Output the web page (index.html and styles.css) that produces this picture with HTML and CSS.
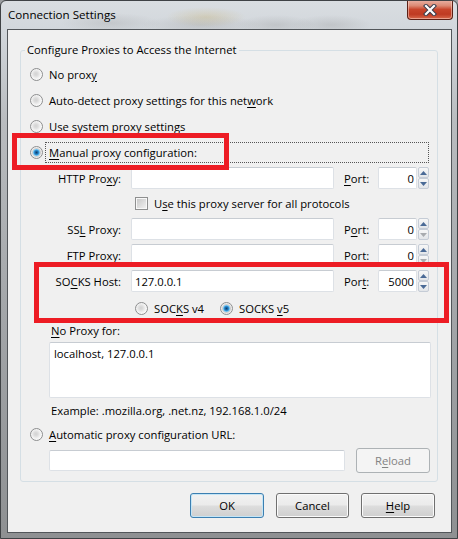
FILE: index.html
```html
<!DOCTYPE html>
<html>
<head>
<meta charset="utf-8">
<title>Connection Settings</title>
<link rel="stylesheet" href="styles.css">
</head>
<body>
<div class="window">
  <div class="titlebar">
    <span class="title">Connection Settings</span>
    <div class="close">
      <svg width="16" height="12" viewBox="0 0 16 12">
        <path d="M4 2 L12 10 M12 2 L4 10" stroke="#3b3f4d" stroke-width="4.2" stroke-linecap="square" fill="none"/>
        <path d="M4 2 L12 10 M12 2 L4 10" stroke="#ffffff" stroke-width="2.2" stroke-linecap="square" fill="none"/>
      </svg>
    </div>
  </div>
  <div class="client">
    <fieldset class="group">
      <legend>Configure Proxies to Access the Internet</legend>
      <div class="opt"><span class="radio"></span><span class="lbl">No prox<u>y</u></span></div>
      <div class="opt"><span class="radio"></span><span class="lbl">Auto-detect proxy settings for this net<u>w</u>ork</span></div>
      <div class="opt"><span class="radio"></span><span class="lbl"><u>U</u>se system proxy settings</span></div>
      <div class="opt"><span class="radio on"></span><span class="lbl focus"><u>M</u>anual proxy configuration:</span></div>

      <div class="field first">
        <span class="flabel">HTTP Pro<u>x</u>y:</span>
        <span class="input host"></span>
        <span class="plabel"><u>P</u>ort:</span>
        <span class="input port">0</span>
        <span class="spin"><span class="sb"><svg width="7" height="4" viewBox="0 0 7 4"><path d="M0 4 L3.5 0 L7 4Z" class="ar"/></svg></span><span class="sb"><svg width="7" height="4" viewBox="0 0 7 4"><path d="M0 0 L3.5 4 L7 0Z" class="ar"/></svg></span></span>
      </div>

      <div class="check-row"><span class="check"></span><span class="lbl">U<u>s</u>e this proxy server for all protocols</span></div>

      <div class="field">
        <span class="flabel">SS<u>L</u> Proxy:</span>
        <span class="input host"></span>
        <span class="plabel">P<u>o</u>rt:</span>
        <span class="input port">0</span>
        <span class="spin"><span class="sb"><svg width="7" height="4" viewBox="0 0 7 4"><path d="M0 4 L3.5 0 L7 4Z" class="ar"/></svg></span><span class="sb off"><svg width="7" height="4" viewBox="0 0 7 4"><path d="M0 0 L3.5 4 L7 0Z" class="ar"/></svg></span></span>
      </div>

      <div class="field">
        <span class="flabel"><u>F</u>TP Proxy:</span>
        <span class="input host"></span>
        <span class="plabel">Po<u>r</u>t:</span>
        <span class="input port">0</span>
        <span class="spin"><span class="sb"><svg width="7" height="4" viewBox="0 0 7 4"><path d="M0 4 L3.5 0 L7 4Z" class="ar"/></svg></span><span class="sb off"><svg width="7" height="4" viewBox="0 0 7 4"><path d="M0 0 L3.5 4 L7 0Z" class="ar"/></svg></span></span>
      </div>

      <div class="field">
        <span class="flabel">SO<u>C</u>KS Host:</span>
        <span class="input host">127.0.0.1</span>
        <span class="plabel">Por<u>t</u>:</span>
        <span class="input port">5000</span>
        <span class="spin"><span class="sb"><svg width="7" height="4" viewBox="0 0 7 4"><path d="M0 4 L3.5 0 L7 4Z" class="ar"/></svg></span><span class="sb"><svg width="7" height="4" viewBox="0 0 7 4"><path d="M0 0 L3.5 4 L7 0Z" class="ar"/></svg></span></span>
      </div>

      <div class="socks-row">
        <span class="sopt v4"><span class="radio"></span><span class="lbl">SOC<u>K</u>S v4</span></span>
        <span class="sopt"><span class="radio on"></span><span class="lbl">SOCKS <u>v</u>5</span></span>
      </div>

      <div class="note"><u>N</u>o Proxy for:</div>
      <div class="textarea">localhost, 127.0.0.1</div>
      <div class="note example">Example: .mozilla.org, .net.nz, 192.168.1.0/24</div>

      <div class="opt auto"><span class="radio"></span><span class="lbl"><u>A</u>utomatic proxy configuration URL:</span></div>
      <div class="url-row">
        <span class="input url"></span>
        <span class="btn disabled reload">R<u>e</u>load</span>
      </div>
    </fieldset>

    <div class="buttons">
      <span class="btn default">OK</span>
      <span class="btn cancel">Cancel</span>
      <span class="btn"><u>H</u>elp</span>
    </div>
  </div>
  <div class="mark m1"></div>
  <div class="mark m2"></div>
</div>
</body>
</html>
```

FILE: styles.css
```css
html, body {
  margin: 0;
  padding: 0;
  background: #9a9da0;
}

.window {
  position: relative;
  width: 458px;
  height: 539px;
  box-sizing: border-box;
  border: 1px solid #3f4245;
  border-radius: 6px 6px 0 0;
  background:
    radial-gradient(ellipse 40px 10px at 205px 16px, rgba(200, 180, 120, 0.35), transparent),
    radial-gradient(ellipse 50px 10px at 110px 22px, rgba(150, 150, 150, 0.25), transparent),
    radial-gradient(ellipse 60px 10px at 200px 24px, rgba(140, 140, 140, 0.25), transparent),
    radial-gradient(ellipse 40px 10px at 275px 24px, rgba(140, 140, 140, 0.25), transparent),
    radial-gradient(ellipse 40px 10px at 330px 24px, rgba(140, 140, 140, 0.25), transparent),
    linear-gradient(#d9dde1 0, #d2d7dc 28px, #b9bcbf 120px, #a4a7aa 300px, #8e9092 539px);
  font-family: "Open Sans", "Noto Sans", sans-serif;
  font-size: 11.25px;
  line-height: 15px;
  color: #000;
  overflow: hidden;
}

.titlebar {
  display: flex;
  justify-content: space-between;
  align-items: flex-start;
  height: 28px;
}

.title {
  margin: 6px 0 0 7px;
  font-size: 11.6px;
  line-height: 16px;
  color: #000;
}

.close {
  width: 44px;
  height: 19px;
  margin-right: 4px;
  margin-top: -1px;
  border: 1px solid #5b2016;
  border-top: none;
  border-radius: 0 0 4px 4px;
  background: linear-gradient(#e9b3a6 0, #dc8a74 30%, #c8452b 50%, #bf3a22 75%, #d8694c 100%);
  box-shadow: inset 0 0 0 1px rgba(255, 220, 210, 0.5);
  display: flex;
  align-items: center;
  justify-content: center;
}

.client {
  margin: 0 5px 0 6px;
  height: 504px;
  box-sizing: border-box;
  border: 1px solid #52565a;
  background: #f0f0f0;
  display: flex;
  flex-direction: column;
}

.group {
  margin: 12px 13px 0 12px;
  padding: 3px 0 8px 0;
  border: 1px solid #d5dfe5;
  border-radius: 3px;
  min-width: 0;
}

.group legend {
  margin-left: 4px;
  padding: 0 2px;
  line-height: 16px;
}

u {
  text-decoration: underline;
  text-underline-offset: 2px;
}

.opt {
  display: flex;
  align-items: center;
  height: 26px;
  padding-left: 9px;
}

.opt .lbl {
  margin-left: 6px;
}

.opt .lbl.focus {
  flex: 1;
  margin: 0 8px 0 2px;
  padding: 2px 3px;
  border: 1px dotted #555;
}

.radio {
  flex: none;
  width: 13px;
  height: 13px;
  box-sizing: border-box;
  border-radius: 50%;
  border: 1px solid #8d8e8f;
  background: radial-gradient(circle at 45% 45%, #d2d2d2 0, #dcdcdc 2px, #eeeeee 4px, #fbfbfb 6px);
}

.radio.on {
  background: radial-gradient(circle at 50% 50%, #0f3f6a 0, #1f70b0 1.5px, #3ea3e3 2.6px, #8fd2f6 3.3px, #c9c9c9 3.9px, #e6e6e6 4.6px, #fbfbfb 6px);
}

.field {
  display: flex;
  align-items: center;
  height: 22px;
  margin-top: 4px;
}

.field.first {
  margin-top: 2px;
}

.flabel {
  width: 100px;
  text-align: right;
  flex: none;
}

.input {
  box-sizing: border-box;
  height: 22px;
  background: #fff;
  border: 1px solid #dde1e6;
  border-top-color: #c7ccd2;
  border-radius: 2px;
  padding: 0 3px;
  display: flex;
  align-items: center;
  flex: none;
}

.input.host {
  width: 203px;
  margin-left: 10px;
}

.plabel {
  width: 34px;
  margin-left: 10px;
  flex: none;
}

.input.port {
  width: 39px;
  justify-content: flex-end;
  padding-right: 2px;
}

.spin {
  display: flex;
  flex-direction: column;
  margin-left: 1px;
  width: 11px;
  height: 22px;
}

.sb {
  height: 11px;
  box-sizing: border-box;
  border: 1px solid #c5ccd6;
  border-radius: 2px;
  background: linear-gradient(#f7f7f7, #e2e5e9);
  display: flex;
  align-items: center;
  justify-content: center;
}

.sb .ar {
  fill: #4a6a96;
}

.sb.off .ar {
  fill: #a8abaf;
}

.check-row {
  display: flex;
  align-items: center;
  height: 21px;
  margin-top: 4px;
  padding-left: 114px;
}

.check {
  flex: none;
  width: 13px;
  height: 13px;
  box-sizing: border-box;
  border: 1px solid #8e8f8f;
  background: linear-gradient(135deg, #c4c4c4, #f4f4f4);
  box-shadow: inset 0 0 0 1px #f8f8f8;
}

.check-row .lbl {
  margin-left: 6px;
}

.socks-row {
  display: flex;
  align-items: center;
  height: 24px;
  margin-top: 4px;
  padding-left: 114px;
}

.sopt {
  display: flex;
  align-items: center;
}

.sopt.v4 {
  width: 85px;
}

.sopt .lbl {
  margin-left: 6px;
}

.note {
  height: 20px;
  display: flex;
  align-items: center;
  padding-left: 30px;
}

.note.example {
  margin-top: 2px;
}

.textarea {
  margin: 2px 0 0 28px;
  width: 382px;
  height: 56px;
  box-sizing: border-box;
  background: #fff;
  border: 1px solid #dde1e6;
  border-top-color: #c7ccd2;
  border-radius: 2px;
  padding: 3px 4px;
}

.opt.auto {
  margin-top: 1px;
}

.url-row {
  display: flex;
  align-items: center;
  height: 25px;
  margin-top: 1px;
  padding-left: 28px;
}

.input.url {
  width: 296px;
  height: 21px;
}

.btn {
  box-sizing: border-box;
  width: 74px;
  height: 25px;
  border: 1px solid #707070;
  border-radius: 3px;
  background: linear-gradient(#f2f2f2 0, #ebebeb 48%, #dddddd 52%, #cfcfcf 100%);
  box-shadow: inset 0 0 0 1px #fbfbfb;
  display: flex;
  align-items: center;
  justify-content: center;
  flex: none;
}

.btn.disabled {
  border-color: #adb2b5;
  background: #f4f4f4;
  box-shadow: none;
  color: #838383;
}

.btn.reload {
  margin-left: 11px;
}

.btn.default {
  border-color: #3c7fb1;
  box-shadow: inset 0 0 0 1px #c4e5f6;
  background: linear-gradient(#eaf6fd 0, #d9f0fc 48%, #bee6fd 52%, #a7d9f5 100%);
  background: linear-gradient(#f2f2f2 0, #ebebeb 48%, #dddddd 52%, #cfcfcf 100%);
}

.btn.cancel {
  width: 73px;
}

.buttons {
  display: flex;
  justify-content: flex-end;
  gap: 12px;
  margin-top: 11px;
  padding-right: 16px;
}

.mark {
  position: absolute;
  box-sizing: border-box;
  border: 5px solid #ed1c24;
}

.m1 {
  left: 11px;
  top: 132px;
  width: 217px;
  height: 37px;
}

.m2 {
  left: 33px;
  top: 261px;
  width: 415px;
  height: 61px;
}
```
